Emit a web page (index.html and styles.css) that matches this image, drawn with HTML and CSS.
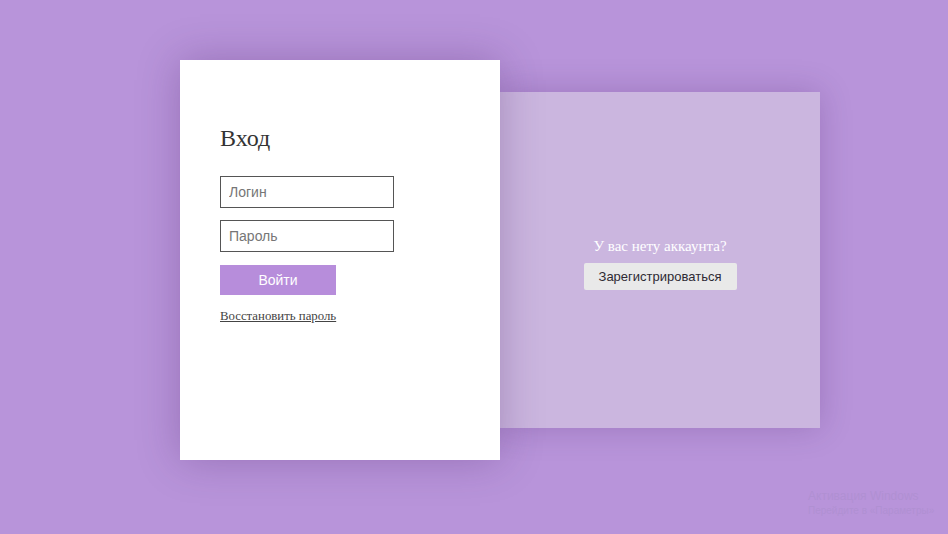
FILE: index.html
```html
<!DOCTYPE html>
<html lang="ru">
<head>
<meta charset="utf-8">
<title>Вход</title>
<link rel="stylesheet" href="styles.css">
</head>
<body>
<main class="stage">
  <section class="login-card">
    <h1 class="title">Вход</h1>
    <form class="form">
      <input class="field" type="text" placeholder="Логин">
      <input class="field" type="password" placeholder="Пароль">
      <button class="btn-login" type="button">Войти</button>
    </form>
    <a class="restore" href="#">Восстановить пароль</a>
  </section>
  <section class="register-panel">
    <p class="question">У вас нету аккаунта?</p>
    <button class="btn-register" type="button">Зарегистрироваться</button>
  </section>
</main>
<div class="watermark">
  <div class="wm-title">Активация Windows</div>
  <div class="wm-sub">Перейдите в «Параметры»</div>
</div>
</body>
</html>
```
FILE: styles.css
```css
html, body {
  margin: 0;
  padding: 0;
}
body {
  width: 948px;
  height: 534px;
  background: #b894da;
  overflow: hidden;
  position: relative;
  font-family: "Liberation Serif", "Times New Roman", serif;
}
.stage {
  display: flex;
  align-items: center;
  padding: 60px 0 0 180px;
}
.login-card {
  width: 320px;
  height: 400px;
  box-sizing: border-box;
  background: #ffffff;
  padding: 64px 40px 0 40px;
  box-shadow: 0 0 40px rgba(60, 20, 90, 0.28);
  position: relative;
  z-index: 2;
}
.title {
  margin: 0 0 24px 0;
  font-weight: normal;
  font-size: 24px;
  line-height: 28px;
  color: #333333;
}
.form {
  display: flex;
  flex-direction: column;
  align-items: flex-start;
  gap: 12px;
}
.field {
  width: 174px;
  height: 32px;
  box-sizing: border-box;
  border: 1px solid #555555;
  border-radius: 0;
  padding: 0 8px;
  font-family: "Liberation Sans", Arial, sans-serif;
  font-size: 14px;
  color: #333;
  background: #fff;
  outline: none;
}
.field::placeholder {
  color: #767676;
}
.btn-login {
  width: 116px;
  height: 30px;
  margin-top: 1px;
  border: none;
  background: #b78ddb;
  color: #ffffff;
  font-family: "Liberation Sans", Arial, sans-serif;
  font-size: 14px;
  padding: 0;
}
.restore {
  display: inline-block;
  margin-top: 14px;
  font-size: 12.8px;
  color: #444444;
  text-decoration: underline;
}
.register-panel {
  width: 320px;
  height: 336px;
  box-sizing: border-box;
  padding-top: 7px;
  background: #cbb6df;
  display: flex;
  flex-direction: column;
  align-items: center;
  justify-content: center;
  box-shadow: 0 0 30px rgba(60, 20, 90, 0.22);
  position: relative;
  z-index: 1;
}
.question {
  margin: 0 0 8px 0;
  color: #ffffff;
  font-size: 15px;
  line-height: 18px;
}
.btn-register {
  width: 153px;
  height: 27px;
  border: none;
  border-radius: 2px;
  background: #e9e9e9;
  color: #2e2a33;
  font-family: "Liberation Sans", Arial, sans-serif;
  font-size: 13px;
  padding: 0;
}
.watermark {
  position: absolute;
  left: 808px;
  top: 488px;
  width: 136px;
  color: #b090d2;
  font-family: "Liberation Sans", Arial, sans-serif;
  white-space: nowrap;
}
.wm-title {
  font-size: 12px;
  line-height: 16px;
}
.wm-sub {
  font-size: 10px;
  line-height: 14px;
}
```
